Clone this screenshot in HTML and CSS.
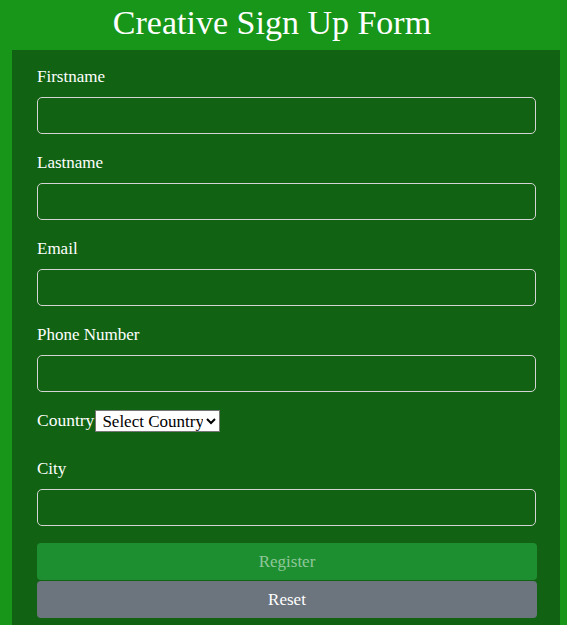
FILE: index.html
```html
<!DOCTYPE html>
<html>
<head>
<meta charset="utf-8">
<link rel="stylesheet" href="styles.css">
</head>
<body>
<h1 class="title">Creative Sign Up Form</h1>
<form class="card">
  <div class="field">
    <label class="label">Firstname</label>
    <input class="input" type="text">
  </div>
  <div class="field">
    <label class="label">Lastname</label>
    <input class="input" type="text">
  </div>
  <div class="field">
    <label class="label">Email</label>
    <input class="input" type="text">
  </div>
  <div class="field">
    <label class="label">Phone Number</label>
    <input class="input" type="text">
  </div>
  <div class="country">
    <span class="country-label">Country</span>
    <select class="select"><option>Select Country</option></select>
  </div>
  <div class="field">
    <label class="label">City</label>
    <input class="input" type="text">
  </div>
  <div class="buttons">
    <button type="button" class="btn btn-register">Register</button>
    <button type="button" class="btn btn-reset">Reset</button>
  </div>
</form>
</body>
</html>
```
FILE: styles.css
```css
html, body {
  margin: 0;
  padding: 0;
}
body {
  background: #17961a;
  font-family: "Liberation Serif", "DejaVu Serif", serif;
  color: #ffffff;
  padding: 0 7px 0 12px;
}
.title {
  margin: 0;
  height: 50px;
  line-height: 46px;
  font-size: 34px;
  font-weight: normal;
  text-align: center;
  padding-right: 28px;
}
.card {
  background: #116313;
  padding: 14px 24px 20px 25px;
}
.field {
  margin-bottom: 16px;
}
.label {
  display: block;
  font-size: 17px;
  line-height: 25px;
  margin-bottom: 8px;
}
.input {
  display: block;
  box-sizing: border-box;
  width: 100%;
  height: 37px;
  background: transparent;
  border: 1px solid #d4d4d4;
  border-radius: 5px;
  color: #fff;
  font-family: inherit;
  font-size: 16px;
  padding: 0 12px;
  outline: none;
}
.country {
  display: flex;
  align-items: center;
  height: 25px;
  margin-bottom: 23px;
  font-size: 17.5px;
}
.select {
  box-sizing: border-box;
  width: 125px;
  height: 22px;
  margin-top: 1px;
  margin-left: 1px;
  font-family: "Liberation Serif", serif;
  font-size: 17px;
  background: #fff;
  color: #000;
  border: 1px solid #767676;
  border-radius: 0;
  padding: 0 0 0 2px;
}
.buttons {
  display: flex;
  flex-direction: column;
  gap: 1px;
  padding-top: 1px;
  margin-right: -1px;
}
.btn {
  height: 37px;
  border: none;
  border-radius: 4px;
  font-family: inherit;
  font-size: 17px;
  cursor: pointer;
}
.btn-register {
  background: #1e8f30;
  color: #8fc79a;
}
.btn-reset {
  background: #6c757d;
  color: #fff;
}
```
